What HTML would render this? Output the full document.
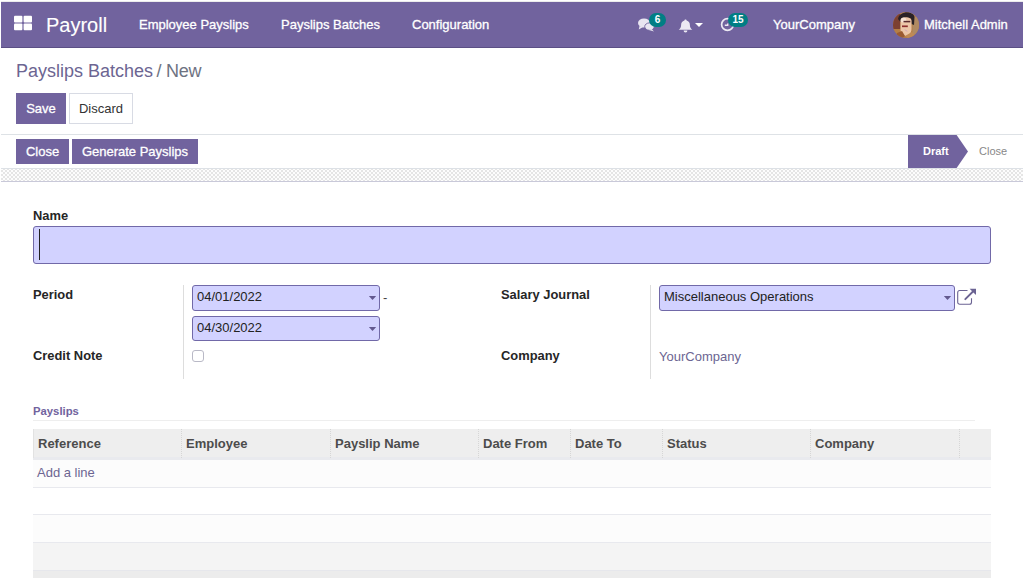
<!DOCTYPE html>
<html lang="en">
<head>
<meta charset="utf-8">
<title>Odoo - Payslips Batches</title>
<style>
*{box-sizing:border-box}
html,body{margin:0;padding:0}
body{width:1024px;height:581px;overflow:hidden;background:#fff;font-family:"Liberation Sans",Arial,sans-serif;font-size:14px;color:#4c4c4c;position:relative}
.abs{position:absolute}
.nav{left:1px;top:2px;width:1022px;height:46px;background:#71639e;border-bottom:1px solid #5b4f85}
.nav .t{position:absolute;color:#fff;white-space:nowrap;line-height:1;-webkit-text-stroke:0.300px #fff}
.brand{left:45px;top:13px;font-size:20px;-webkit-text-stroke:0.100px #fff !important}
.mi{font-size:13px;top:16px}
.bc{left:16px;top:61px;font-size:18px;line-height:20px;color:#6c6592;white-space:nowrap}
.bc span{color:#6e7382}
.btn{position:absolute;height:31px;line-height:31px;font-size:13px;text-align:center;white-space:nowrap}
.btn.p{background:#71639e;color:#fff;-webkit-text-stroke:0.300px #fff}
.btn.s{background:#fff;color:#333;border:1px solid #d8dbe4;line-height:29px}
.hl{left:1px;top:134px;width:1022px;height:1px;background:#dee2e6}
.sb{height:25px;line-height:25px;top:139px}
.checker{left:1px;top:168px;width:1022px;height:14px;border-top:1px solid #dde1e6;border-bottom:1px solid #c9c9d9;background:repeating-conic-gradient(#e5e5e5 0% 25%,#fdfdfd 0% 50%) 2px 1px/4px 4px}
.lbl{position:absolute;font-weight:bold;font-size:12.900px;color:#262626;line-height:15px;white-space:nowrap}
.inp{position:absolute;background:#d2d2ff;border:1px solid #7169a8;border-radius:3px;font-size:13px;color:#222;line-height:22px;padding-left:4px;white-space:nowrap}
.caret{position:absolute;right:2.800px;top:10px;width:7.400px;height:4px;background:#63598f;clip-path:polygon(0 0,100% 0,50% 100%)}
.vs{position:absolute;width:1px;background:#ddd}
.th{position:absolute;top:429px;height:29px;line-height:29px;font-weight:bold;font-size:13px;color:#4c4c4c;padding-left:4px;border-left:1px dotted #d6d6d6;white-space:nowrap}
</style>
</head>
<body>
<div class="abs" style="left:1px;top:1px;width:1022px;height:1px;background:#ececec"></div>
<div class="abs nav">
  <svg class="abs" style="left:13px;top:13px" width="18" height="16" viewBox="0 0 18 16"><rect x="0" y="0.800" width="8.400" height="6.600" rx="1" fill="#fff"/><rect x="9.600" y="0.800" width="8.400" height="6.600" rx="1" fill="#fff"/><rect x="0" y="8.600" width="8.400" height="6.600" rx="1" fill="#fff"/><rect x="9.600" y="8.600" width="8.400" height="6.600" rx="1" fill="#fff"/></svg>
  <div class="t brand">Payroll</div>
  <div class="t mi" style="left:138px">Employee Payslips</div>
  <div class="t mi" style="left:280px">Payslips Batches</div>
  <div class="t mi" style="left:411px">Configuration</div>
  <!-- chat icon -->
  <svg class="abs" style="left:637px;top:16px" width="17" height="14" viewBox="0 0 17 14"><ellipse cx="6" cy="5" rx="6" ry="4.600" fill="#e9e6f1"/><path d="M1.500 8 L0.800 11.500 L5 9 Z" fill="#e9e6f1"/><ellipse cx="11.500" cy="8.600" rx="4.800" ry="3.700" fill="#e9e6f1" stroke="#71639e" stroke-width="0.900"/><path d="M13.500 11 L16 13.500 L11 12 Z" fill="#e9e6f1"/></svg>
  <div class="abs" style="left:648px;top:11px;width:17px;height:14px;border-radius:7px;background:#017e84;color:#fff;font-size:10px;font-weight:bold;line-height:14px;text-align:center">6</div>
  <!-- bell -->
  <svg class="abs" style="left:677px;top:16.700px" width="15" height="14" viewBox="0 0 15 14"><path d="M7.500 0.500 C8.200 0.500 8.600 0.900 8.600 1.600 C10.900 2.200 11.900 4.100 11.900 6.300 C11.900 8.600 13 9.800 14.300 10.800 L0.700 10.800 C2 9.800 3.100 8.600 3.100 6.300 C3.100 4.100 4.100 2.200 6.400 1.600 C6.400 0.900 6.800 0.500 7.500 0.500 Z" fill="#ece9f3"/><path d="M5.600 11.500 A1.900 1.900 0 0 0 9.400 11.500 Z" fill="#ece9f3"/></svg>
  <div class="abs" style="left:694px;top:21px;width:0;height:0;border-left:4px solid transparent;border-right:4px solid transparent;border-top:4px solid #fff"></div>
  <!-- clock -->
  <svg class="abs" style="left:719px;top:15px" width="15" height="15" viewBox="0 0 15 15"><circle cx="7.500" cy="7.500" r="5.900" fill="none" stroke="#ece9f3" stroke-width="1.700"/><path d="M7.700 6.500 V8.300 H4.800" fill="none" stroke="#ece9f3" stroke-width="1.400"/></svg>
  <div class="abs" style="left:727px;top:11px;width:20px;height:14px;border-radius:7px;background:#017e84;color:#fff;font-size:10px;font-weight:bold;line-height:14px;text-align:center">15</div>
  <div class="t mi" style="left:772px">YourCompany</div>
  <!-- avatar -->
  <svg class="abs" style="left:892px;top:10px" width="26" height="26" viewBox="0 0 26 26"><defs><clipPath id="av"><circle cx="13" cy="13" r="13"/></clipPath><filter id="avb" x="-10%" y="-10%" width="120%" height="120%"><feGaussianBlur stdDeviation="0.700"/></filter></defs><g clip-path="url(#av)"><rect width="26" height="26" fill="#b57e45"/><g filter="url(#avb)"><rect x="-1" y="2" width="8.500" height="15" fill="#7c4030"/><rect x="19.500" y="5" width="8" height="17" fill="#b08a62"/><path d="M5 7 C6 -1 20 -2 21.500 5 L21 13 L18.500 12 L18 6.500 L10 6 L7.500 10 Z" fill="#2b2327"/><path d="M7.500 9 C7.500 4 18.500 4 18.500 9 L18.500 17 C18.500 22 14 24 12.500 24 C10 24 7.500 21 7.500 17 Z" fill="#ecc6a8"/><ellipse cx="10.500" cy="8" rx="2.800" ry="2.500" fill="#f6e2d4"/><path d="M10.500 9.600 H17.300" stroke="#5a2a2e" stroke-width="1.500"/><path d="M9 14.300 H14.800" stroke="#8c2f2f" stroke-width="1.700"/><path d="M12 17.500 L14 19.500" stroke="#c9a0c0" stroke-width="1"/><path d="M4 21 L9 19 L12 24 L8 27 L2 26 Z" fill="#9a5a32"/><path d="M12 24 L19 20 L22 23 L16 27 Z" fill="#c08a55"/></g></g></svg>
  <div class="t mi" style="left:923px">Mitchell Admin</div>
</div>

<div class="abs bc">Payslips Batches<span style="position:absolute;left:140.500px;top:0">/</span><span style="position:absolute;left:150px;top:0;letter-spacing:-0.300px">New</span></div>
<div class="btn p" style="left:16px;top:93px;width:50px">Save</div>
<div class="btn s" style="left:69px;top:93px;width:64px">Discard</div>
<div class="abs hl"></div>

<div class="btn p sb" style="left:16px;width:53px">Close</div>
<div class="btn p sb" style="left:72px;width:126px">Generate Payslips</div>

<!-- status -->
<svg class="abs" style="left:908px;top:135px" width="62" height="33" viewBox="0 0 62 33"><path d="M0 0 H48.600 L60 16.500 L48.600 33 H0 Z" fill="#71639e"/></svg>
<div class="abs" style="left:923px;top:145px;font-size:11px;font-weight:bold;color:#fff;line-height:13px">Draft</div>
<div class="abs" style="left:979px;top:145px;font-size:11px;color:#888;line-height:13px">Close</div>

<div class="abs checker"></div>

<!-- form -->
<div class="lbl" style="left:33px;top:208px">Name</div>
<div class="inp" style="left:33px;top:226px;width:958px;height:38px"><div class="abs" style="left:4.500px;top:2px;width:1px;height:31px;background:#222"></div></div>

<div class="lbl" style="left:33px;top:287px">Period</div>
<div class="vs" style="left:183px;top:285px;height:94px"></div>
<div class="inp" style="left:192px;top:285px;width:188px;height:26px">04/01/2022<div class="caret"></div></div>
<div class="abs" style="left:383px;top:290px;font-size:13px;color:#444;line-height:15px">-</div>
<div class="inp" style="left:192px;top:316px;width:188px;height:25px">04/30/2022<div class="caret"></div></div>
<div class="lbl" style="left:33px;top:348px">Credit Note</div>
<div class="abs" style="left:192px;top:350px;width:12px;height:12px;border:1px solid #b9b9c6;border-radius:3px;background:#fff"></div>

<div class="lbl" style="left:501px;top:287px">Salary Journal</div>
<div class="vs" style="left:650px;top:285px;height:94px"></div>
<div class="inp" style="left:659px;top:285px;width:296px;height:26px">Miscellaneous Operations<div class="caret"></div></div>
<svg class="abs" style="left:956px;top:287px" width="21" height="19" viewBox="0 0 21 19"><path d="M11.500 3.500 H3.700 a2 2 0 0 0 -2 2 V15.200 a2 2 0 0 0 2 2 H13.500 a2 2 0 0 0 2 -2 V11.300" fill="none" stroke="#6b6393" stroke-width="1.100"/><path d="M9.300 12.200 L17.500 4" fill="none" stroke="#6b6393" stroke-width="1.900" stroke-linecap="round"/><path d="M13.600 1.700 H20 V8 Z" fill="#6b6393"/></svg>
<div class="lbl" style="left:501px;top:348px">Company</div>
<div class="abs" style="left:659px;top:349px;font-size:13px;color:#6c6592;line-height:15px">YourCompany</div>

<!-- payslips -->
<div class="abs" style="left:33px;top:405px;font-size:11.300px;font-weight:bold;color:#71639e;line-height:13px">Payslips</div>
<div class="abs" style="left:33px;top:420px;width:942px;height:1px;background:#eee"></div>
<div class="abs" style="left:33px;top:429px;width:958px;height:31px;background:#eee;border-bottom:3px solid #e9eaee"></div>
<div class="th" style="left:33px;border-left:1px solid #e2e2e2">Reference</div>
<div class="th" style="left:181px">Employee</div>
<div class="th" style="left:330px">Payslip Name</div>
<div class="th" style="left:478px">Date From</div>
<div class="th" style="left:570px">Date To</div>
<div class="th" style="left:662px">Status</div>
<div class="th" style="left:810px">Company</div>
<div class="th" style="left:959px"></div>
<div class="abs" style="left:33px;top:460px;width:958px;height:28px;background:#fcfcfc;border-bottom:1px solid #e8e9ee"></div>
<div class="abs" style="left:37px;top:465px;font-size:13px;color:#6c6592;line-height:16px">Add a line</div>
<div class="abs" style="left:33px;top:488px;width:958px;height:27px;background:#fff;border-bottom:1px solid #e8e9ee"></div>
<div class="abs" style="left:33px;top:515px;width:958px;height:28px;background:#fcfcfc;border-bottom:1px solid #e8e9ee"></div>
<div class="abs" style="left:33px;top:543px;width:958px;height:28px;background:#f4f4f4;border-bottom:1px solid #e6e7ec"></div>
<div class="abs" style="left:33px;top:571px;width:958px;height:7px;background:#ececec"></div>
</body>
</html>
